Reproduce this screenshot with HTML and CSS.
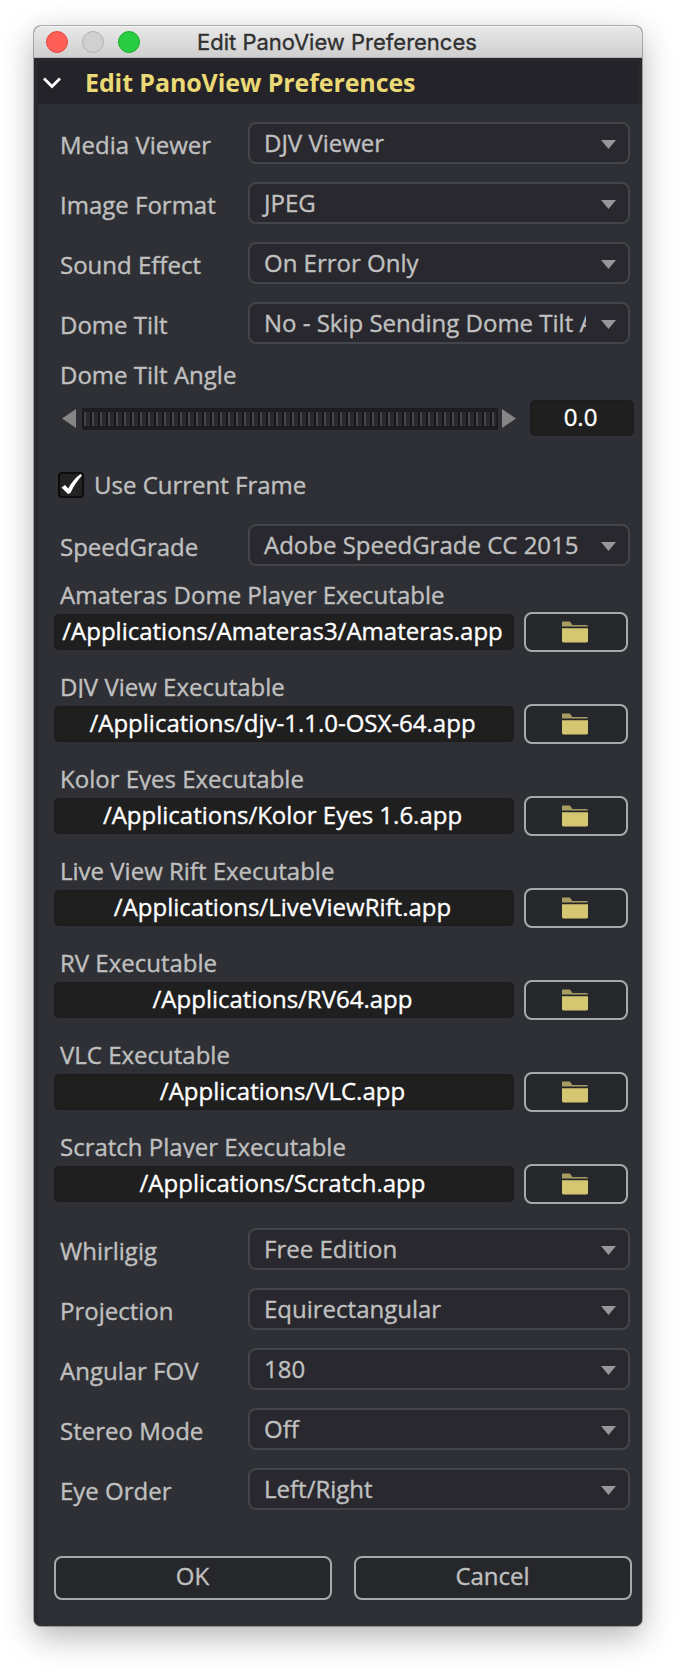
FILE: index.html
```
<!DOCTYPE html>
<html lang="en">
<head>
<meta charset="utf-8">
<title>Edit PanoView Preferences</title>
<link rel="stylesheet" href="styles.css">
</head>
<body>
<svg class="defs" aria-hidden="true">
  <symbol id="folder" viewBox="0 0 26 22">
    <path d="M0 5V1.2Q0 .4.8.4H8L10.3 4H24.6Q26 4 26 5.6H0Z" fill="#a79c62"/>
    <path d="M0 7.2H26V20Q26 21.4 24.6 21.4H1.4Q0 21.4 0 20Z" fill="#d5c772"/>
  </symbol>
</svg>
<main class="window">
  <header class="titlebar">
    <i class="light red"></i><i class="light gray"></i><i class="light green"></i>
    <span class="title">Edit PanoView Preferences</span>
  </header>
  <div class="content">
    <div class="section-head">
      <svg class="chevron" viewBox="0 0 20 14"><path d="M2 2.500L10 10.500L18 2.500" fill="none" stroke="#fff" stroke-width="2.800"/></svg>
      <h1>Edit PanoView Preferences</h1>
    </div>
    <div class="form">
      <div class="row"><label>Media Viewer</label><div class="select"><span>DJV Viewer</span><i></i></div></div>
      <div class="row"><label>Image Format</label><div class="select"><span>JPEG</span><i></i></div></div>
      <div class="row"><label>Sound Effect</label><div class="select"><span>On Error Only</span><i></i></div></div>
      <div class="row"><label>Dome Tilt</label><div class="select"><span>No - Skip Sending Dome Tilt Angle</span><i></i></div></div>
      <div class="angle">
        <label>Dome Tilt Angle</label>
        <div class="slider-row">
          <svg class="arrow" viewBox="0 0 14 19"><path d="M0 9.500L14 0V19Z"/></svg>
          <div class="thumbwheel"><div class="ridges"></div></div>
          <svg class="arrow" viewBox="0 0 14 19"><path d="M14 9.500L0 0V19Z"/></svg>
          <div class="field number">0.0</div>
        </div>
      </div>
      <div class="check-row">
        <span class="checkbox"><svg viewBox="0 0 26 26"><path d="M3.500 15.500L7 13L10.200 16.500Q15 7.500 22.500 2L24 3.500Q17 11 12.500 21L10 22Z" fill="#fff"/></svg></span>
        <label>Use Current Frame</label>
      </div>
      <div class="row"><label>SpeedGrade</label><div class="select"><span>Adobe SpeedGrade CC 2015</span><i></i></div></div>
      <div class="exec"><label>Amateras Dome Player Executable</label><div class="path"><div class="field">/Applications/Amateras3/Amateras.app</div><button class="browse"><svg><use href="#folder"/></svg></button></div></div>
      <div class="exec"><label>DJV View Executable</label><div class="path"><div class="field">/Applications/djv-1.1.0-OSX-64.app</div><button class="browse"><svg><use href="#folder"/></svg></button></div></div>
      <div class="exec"><label>Kolor Eyes Executable</label><div class="path"><div class="field">/Applications/Kolor Eyes 1.6.app</div><button class="browse"><svg><use href="#folder"/></svg></button></div></div>
      <div class="exec"><label>Live View Rift Executable</label><div class="path"><div class="field">/Applications/LiveViewRift.app</div><button class="browse"><svg><use href="#folder"/></svg></button></div></div>
      <div class="exec"><label>RV Executable</label><div class="path"><div class="field">/Applications/RV64.app</div><button class="browse"><svg><use href="#folder"/></svg></button></div></div>
      <div class="exec"><label>VLC Executable</label><div class="path"><div class="field">/Applications/VLC.app</div><button class="browse"><svg><use href="#folder"/></svg></button></div></div>
      <div class="exec"><label>Scratch Player Executable</label><div class="path"><div class="field">/Applications/Scratch.app</div><button class="browse"><svg><use href="#folder"/></svg></button></div></div>
      <div class="row"><label>Whirligig</label><div class="select"><span>Free Edition</span><i></i></div></div>
      <div class="row"><label>Projection</label><div class="select"><span>Equirectangular</span><i></i></div></div>
      <div class="row"><label>Angular FOV</label><div class="select"><span>180</span><i></i></div></div>
      <div class="row"><label>Stereo Mode</label><div class="select"><span>Off</span><i></i></div></div>
      <div class="row"><label>Eye Order</label><div class="select"><span>Left/Right</span><i></i></div></div>
    </div>
    <footer class="actions"><button>OK</button><button>Cancel</button></footer>
  </div>
</main>
</body>
</html>
```
FILE: styles.css
```
* { box-sizing: border-box; }
body {
  margin: 0;
  height: 1668px;
  padding: 26px 34px 42px;
  background: #fff;
  color: #c0c0c0;
  font: 24px "Open Sans", sans-serif;
  -webkit-text-stroke: .35px currentColor;
  overflow: hidden;
}
.defs { position: absolute; width: 0; height: 0; }
.window {
  width: 608px;
  height: 1600px;
  margin-left: 0;
  border-radius: 7px;
  background: #2f3035;
  overflow: hidden;
  box-shadow: 0 0 0 1px rgba(0,0,0,.28), 0 10px 32px rgba(0,0,0,.3);
}
.window { width: 608px; }
.titlebar {
  display: flex;
  align-items: center;
  gap: 14px;
  height: 32px;
  padding-left: 12px;
  background: linear-gradient(#e8e8e8, #cfcfcf);
  border-top: 1px solid #f5f5f5;
  border-bottom: 1px solid #b4b4b4;
  color: #303030;
}
.light { width: 22px; height: 22px; border-radius: 50%; border: 1px solid #b2b2b2; background: #d0d0d0; }
.light.red { background: #ff5f57; border-color: #e2463f; }
.light.green { background: #28cd41; border-color: #1dad2b; }
.title { margin-left: 43px; font: 22px/30px Inter, sans-serif; white-space: nowrap; }
.content { height: 1568px; padding: 4px 4px 0 0; border-left: 4px solid #292a2f; background: linear-gradient(#28282d 46px, #2f3035 46px); }
.section-head { display: flex; align-items: center; height: 42px; padding-left: 4px; background: #242329; }
.chevron { width: 20px; height: 14px; }
h1 { margin: 0 0 0 23px; font-size: 25px; line-height: 40px; height: 42px; font-weight: 700; letter-spacing: -.1px; color: #ead974; white-space: nowrap; -webkit-text-stroke: 0; }
.form { padding: 18px 0 0 16px; }
label { white-space: nowrap; }
.row { display: flex; height: 60px; padding-left: 6px; }
.row label { width: 188px; line-height: 45px; }
.select {
  display: flex;
  align-items: center;
  justify-content: space-between;
  width: 382px;
  height: 42px;
  padding: 0 12px 0 10px;
  border: 2px solid #42454a;
  border-radius: 8px;
  background: #29282e;
}
.select span { flex: none; width: 326px; height: 38px; padding-left: 4px; line-height: 37px; overflow: hidden; white-space: nowrap; }
.select i { flex: none; width: 15px; height: 9px; margin-top: 3px; background: #97979a; clip-path: polygon(0 0, 100% 0, 50% 100%); }
.angle { height: 110px; }
.angle label { display: block; height: 38px; padding-left: 6px; line-height: 25px; }
.slider-row { display: flex; align-items: center; height: 36px; padding-left: 8px; }
.arrow { width: 14px; height: 19px; fill: #858585; }
.thumbwheel { width: 416px; height: 22px; margin: 2px 4px 0 6px; padding: 4px 2px 4px 0; background: #1d1c21; }
.ridges { height: 14px; background: repeating-linear-gradient(90deg, #17171a 0 2px, #44444a 2px 4px, #29292e 4px 8px); }
.field {
  width: 460px;
  height: 36px;
  padding-right: 3px;
  border: 1px solid #1b1b1d;
  border-radius: 5px;
  background: #1f1f1f;
  color: #fff;
  text-align: center;
  line-height: 31px;
  white-space: nowrap;
}
.number { width: 104px; margin-left: 14px; }
.check-row { display: flex; height: 52px; padding-left: 4px; gap: 10px; }
.checkbox { width: 26px; height: 26px; border: 2px solid #0c0c0c; border-radius: 4px; background: #222; }
.checkbox svg { display: block; width: 26px; height: 26px; margin: -2px; }
.check-row label { line-height: 25px; }
.exec { height: 92px; }
.exec label { display: block; height: 22px; line-height: 21px; padding-left: 6px; overflow: hidden; }
.path { display: flex; align-items: center; gap: 10px; height: 40px; margin-top: 6px; }
button {
  padding: 0;
  border: 2px solid #a7aaa9;
  border-radius: 8px;
  background: #26272b;
  color: inherit;
  font: inherit;
}
.browse { display: flex; align-items: center; justify-content: center; width: 104px; height: 40px; }
.browse svg { width: 26px; height: 22px; margin-left: -2px; }
.actions { display: flex; gap: 22px; padding: 28px 0 0 16px; }
.actions button { width: 278px; height: 44px; padding: 0 1px 5px 0; line-height: 35px; }
```
